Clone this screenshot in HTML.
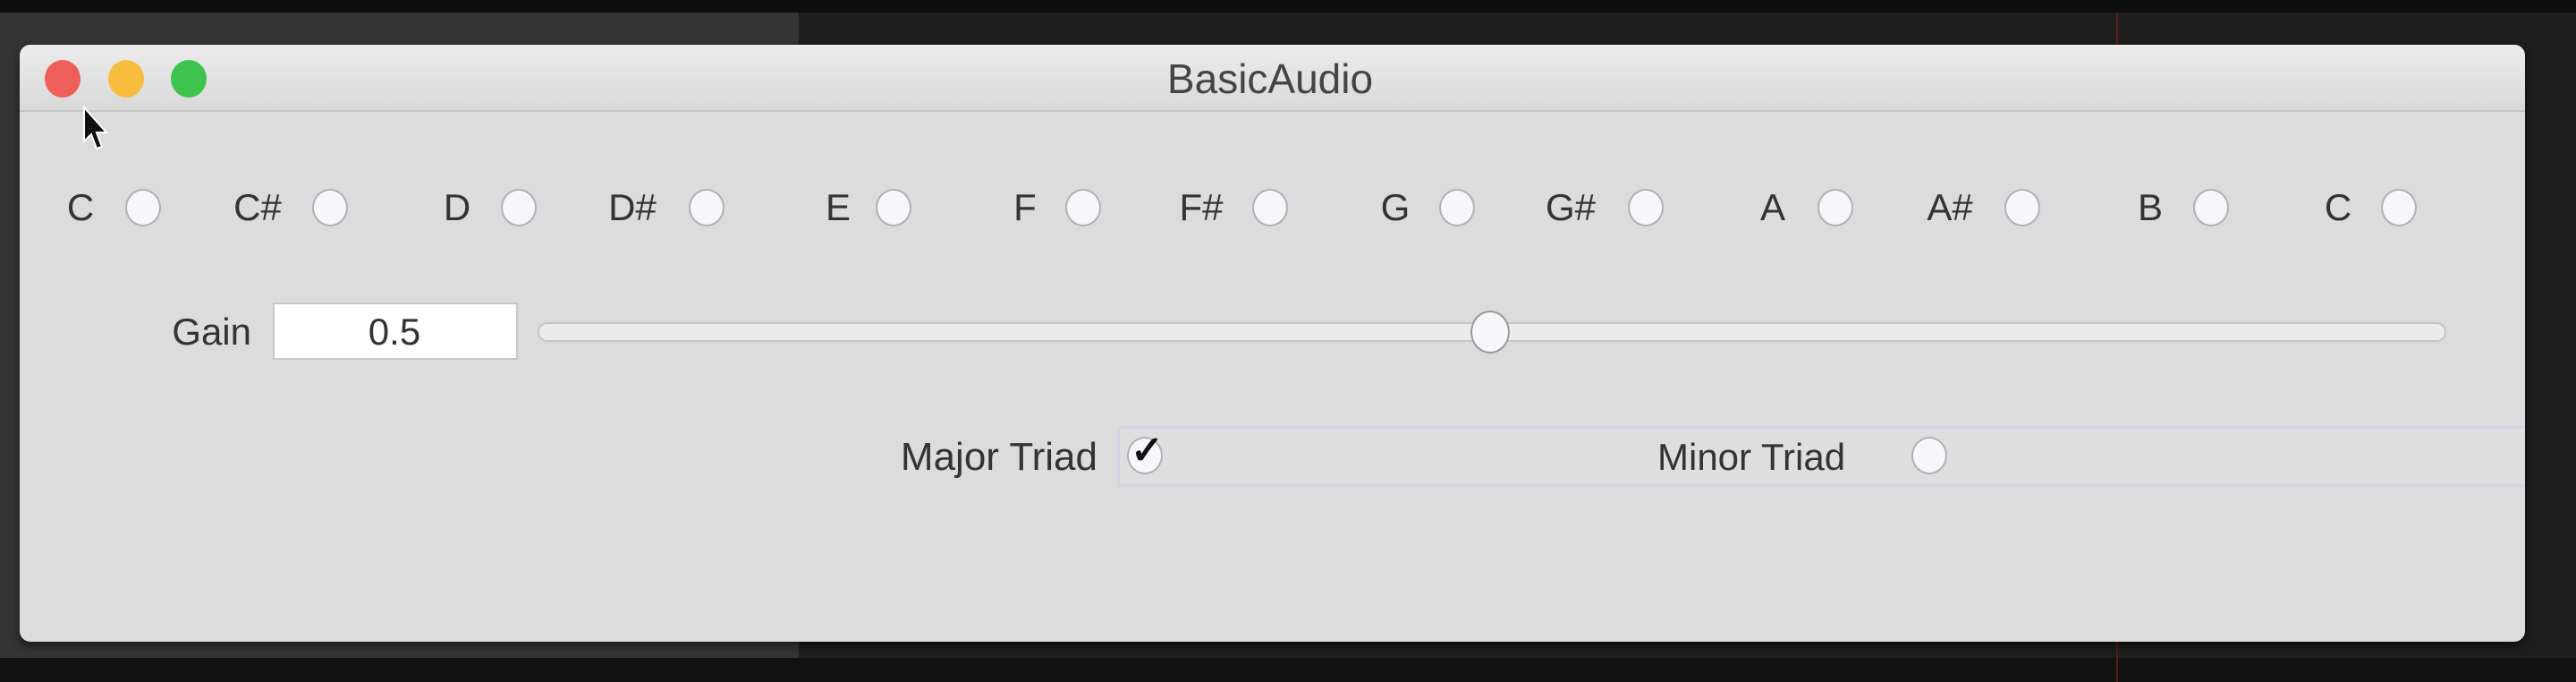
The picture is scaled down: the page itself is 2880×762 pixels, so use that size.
<!DOCTYPE html>
<html><head><meta charset="utf-8"><style>
html,body{margin:0;padding:0;width:2880px;height:762px;overflow:hidden;background:#1b1b1b;font-family:"Liberation Sans",sans-serif;}
.abs{position:absolute;}
.lbl{position:absolute;color:#333;font-size:42px;transform:translate(-50%,-50%);white-space:nowrap;}
.rad{position:absolute;width:40px;height:42px;border-radius:50%;background:#f6f6fb;border:2px solid #b0b0b8;box-sizing:border-box;transform:translate(-50%,-50%);}
</style></head><body>
<div class="abs" style="left:0;top:0;width:2880px;height:14px;background:#0e0e0e"></div>
<div class="abs" style="left:0;top:14px;width:893px;height:748px;background:#343434"></div>
<div class="abs" style="left:893px;top:14px;width:1987px;height:748px;background:#1e1e1e"></div>
<div class="abs" style="left:0;top:735px;width:2880px;height:27px;background:#111"></div>
<div class="abs" style="left:2366px;top:14px;width:2px;height:748px;background:#5a1a1a"></div>

<div class="abs" style="left:22px;top:50px;width:2801px;height:667px;background:#dcdcdc;border-radius:12px;overflow:hidden;box-shadow:0 4px 10px rgba(0,0,0,.6)">
  <div class="abs" style="left:0;top:0;width:2801px;height:73px;background:linear-gradient(#ececec,#d9d9d9);border-bottom:2px solid #c4c4c4"></div>
</div>
<div class="abs" style="left:1420px;top:88px;transform:translate(-50%,-50%);font-size:46px;color:#444">BasicAudio</div>
<div class="abs" style="left:50px;top:67px;width:40px;height:42px;border-radius:50%;background:#ee5f5a"></div>
<div class="abs" style="left:121px;top:67px;width:40px;height:42px;border-radius:50%;background:#f6bd3e"></div>
<div class="abs" style="left:191px;top:67px;width:40px;height:42px;border-radius:50%;background:#3fc34f"></div>
<svg class="abs" style="left:92px;top:118px" width="30" height="52" viewBox="0 0 30 52"><path d="M2 2 L2 40 L10 32 L16 48 L22 46 L16 30 L27 30 Z" fill="#111" stroke="#fff" stroke-width="2"/></svg>

<div class="lbl" style="left:90px;top:232px">C</div><div class="rad" style="left:160px;top:232px"></div>
<div class="lbl" style="left:288px;top:232px">C#</div><div class="rad" style="left:369px;top:232px"></div>
<div class="lbl" style="left:511px;top:232px">D</div><div class="rad" style="left:580px;top:232px"></div>
<div class="lbl" style="left:707px;top:232px">D#</div><div class="rad" style="left:790px;top:232px"></div>
<div class="lbl" style="left:937px;top:232px">E</div><div class="rad" style="left:999px;top:232px"></div>
<div class="lbl" style="left:1146px;top:232px">F</div><div class="rad" style="left:1211px;top:232px"></div>
<div class="lbl" style="left:1343px;top:232px">F#</div><div class="rad" style="left:1420px;top:232px"></div>
<div class="lbl" style="left:1560px;top:232px">G</div><div class="rad" style="left:1629px;top:232px"></div>
<div class="lbl" style="left:1756px;top:232px">G#</div><div class="rad" style="left:1840px;top:232px"></div>
<div class="lbl" style="left:1982px;top:232px">A</div><div class="rad" style="left:2052px;top:232px"></div>
<div class="lbl" style="left:2180px;top:232px">A#</div><div class="rad" style="left:2261px;top:232px"></div>
<div class="lbl" style="left:2404px;top:232px">B</div><div class="rad" style="left:2472px;top:232px"></div>
<div class="lbl" style="left:2614px;top:232px">C</div><div class="rad" style="left:2682px;top:232px"></div>

<div class="abs" style="right:2599px;top:371px;transform:translateY(-50%);font-size:42px;color:#333">Gain</div>
<div class="abs" style="left:305px;top:338px;width:274px;height:64px;background:#fff;border:2px solid #c8c8c8;box-sizing:border-box"></div>
<div class="lbl" style="left:441px;top:371px">0.5</div>
<div class="abs" style="left:601px;top:360px;width:2134px;height:22px;border-radius:11px;background:#ececec;border:2px solid #c6c6c6;box-sizing:border-box"></div>
<div class="rad" style="left:1666px;top:371px;width:44px;height:48px;border-color:#999"></div>

<div class="abs" style="left:1249px;top:476px;width:1574px;height:68px;border:3px solid #d4d4e2;border-right:none;box-sizing:border-box;background:#dedede"></div>
<div class="abs" style="right:1653px;top:511px;transform:translateY(-50%);font-size:44px;color:#333">Major Triad</div>
<div class="rad" style="left:1280px;top:509px"></div>
<div class="abs" style="left:1264px;top:478px;font-size:44px;font-weight:bold;color:#111">✓</div>
<div class="abs" style="left:1853px;top:511px;transform:translateY(-50%);font-size:42px;color:#333">Minor Triad</div>
<div class="rad" style="left:2157px;top:509px"></div>
</body></html>
